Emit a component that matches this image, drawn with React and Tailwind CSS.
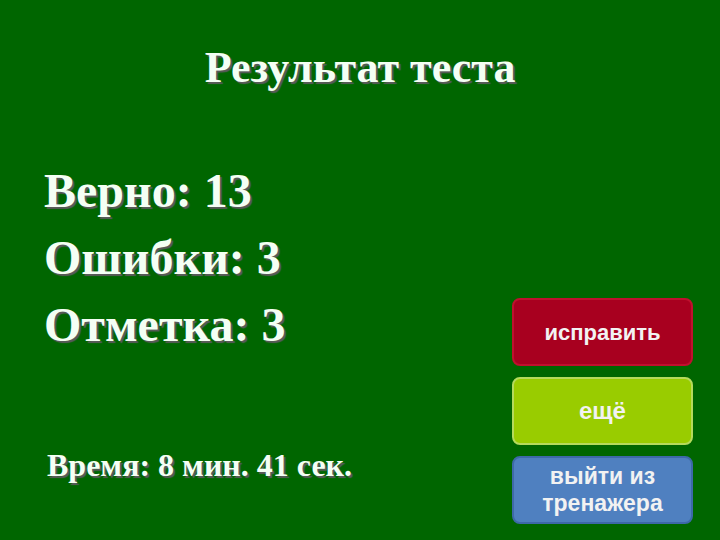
import React from "react";

const serif = "font-['Liberation_Serif','Times_New_Roman',serif]";
const sans = "font-['Liberation_Sans',Arial,sans-serif]";
const shadow = "[text-shadow:2px_2px_1px_#5a5a5a]";

const stats = [
  { label: "Верно", value: 13 },
  { label: "Ошибки", value: 3 },
  { label: "Отметка", value: 3 },
];

const buttons = [
  {
    text: "исправить",
    cls: "bg-[#a8001f] border-[#c0102e] text-[22px]",
  },
  {
    text: "ещё",
    cls: "bg-[#99cc00] border-[#b5da5c] text-[24px]",
  },
  {
    text: "выйти из тренажера",
    cls: "bg-[#4f80c0] border-[#3d69a8] text-[23px] leading-[27px]",
  },
];

export default function App() {
  return (
    <div className="w-[720px] h-[540px] bg-[#006600] overflow-hidden text-[#f4fff4]">
      <h1
        className={`${serif} ${shadow} font-bold text-[44px] leading-[48px] text-center pt-[44px]`}
      >
        Результат теста
      </h1>

      <div className="flex mt-[65px]">
        <div className={`${serif} ${shadow} font-bold pl-[44px] w-[512px]`}>
          {stats.map((s) => (
            <div key={s.label} className="text-[48px] leading-[67px]">
              {s.label}: {s.value}
            </div>
          ))}
          <div className="text-[32px] leading-[36px] mt-[89px] pl-[3px]">
            Время: 8 мин. 41 сек.
          </div>
        </div>

        <div className="flex flex-col gap-[11px] mt-[141px]">
          {buttons.map((b) => (
            <div
              key={b.text}
              className={`${sans} ${b.cls} w-[181px] h-[68px] rounded-[8px] border-2 flex items-center justify-center text-center font-bold text-[#f2f2f2] px-3`}
            >
              {b.text}
            </div>
          ))}
        </div>
      </div>
    </div>
  );
}
